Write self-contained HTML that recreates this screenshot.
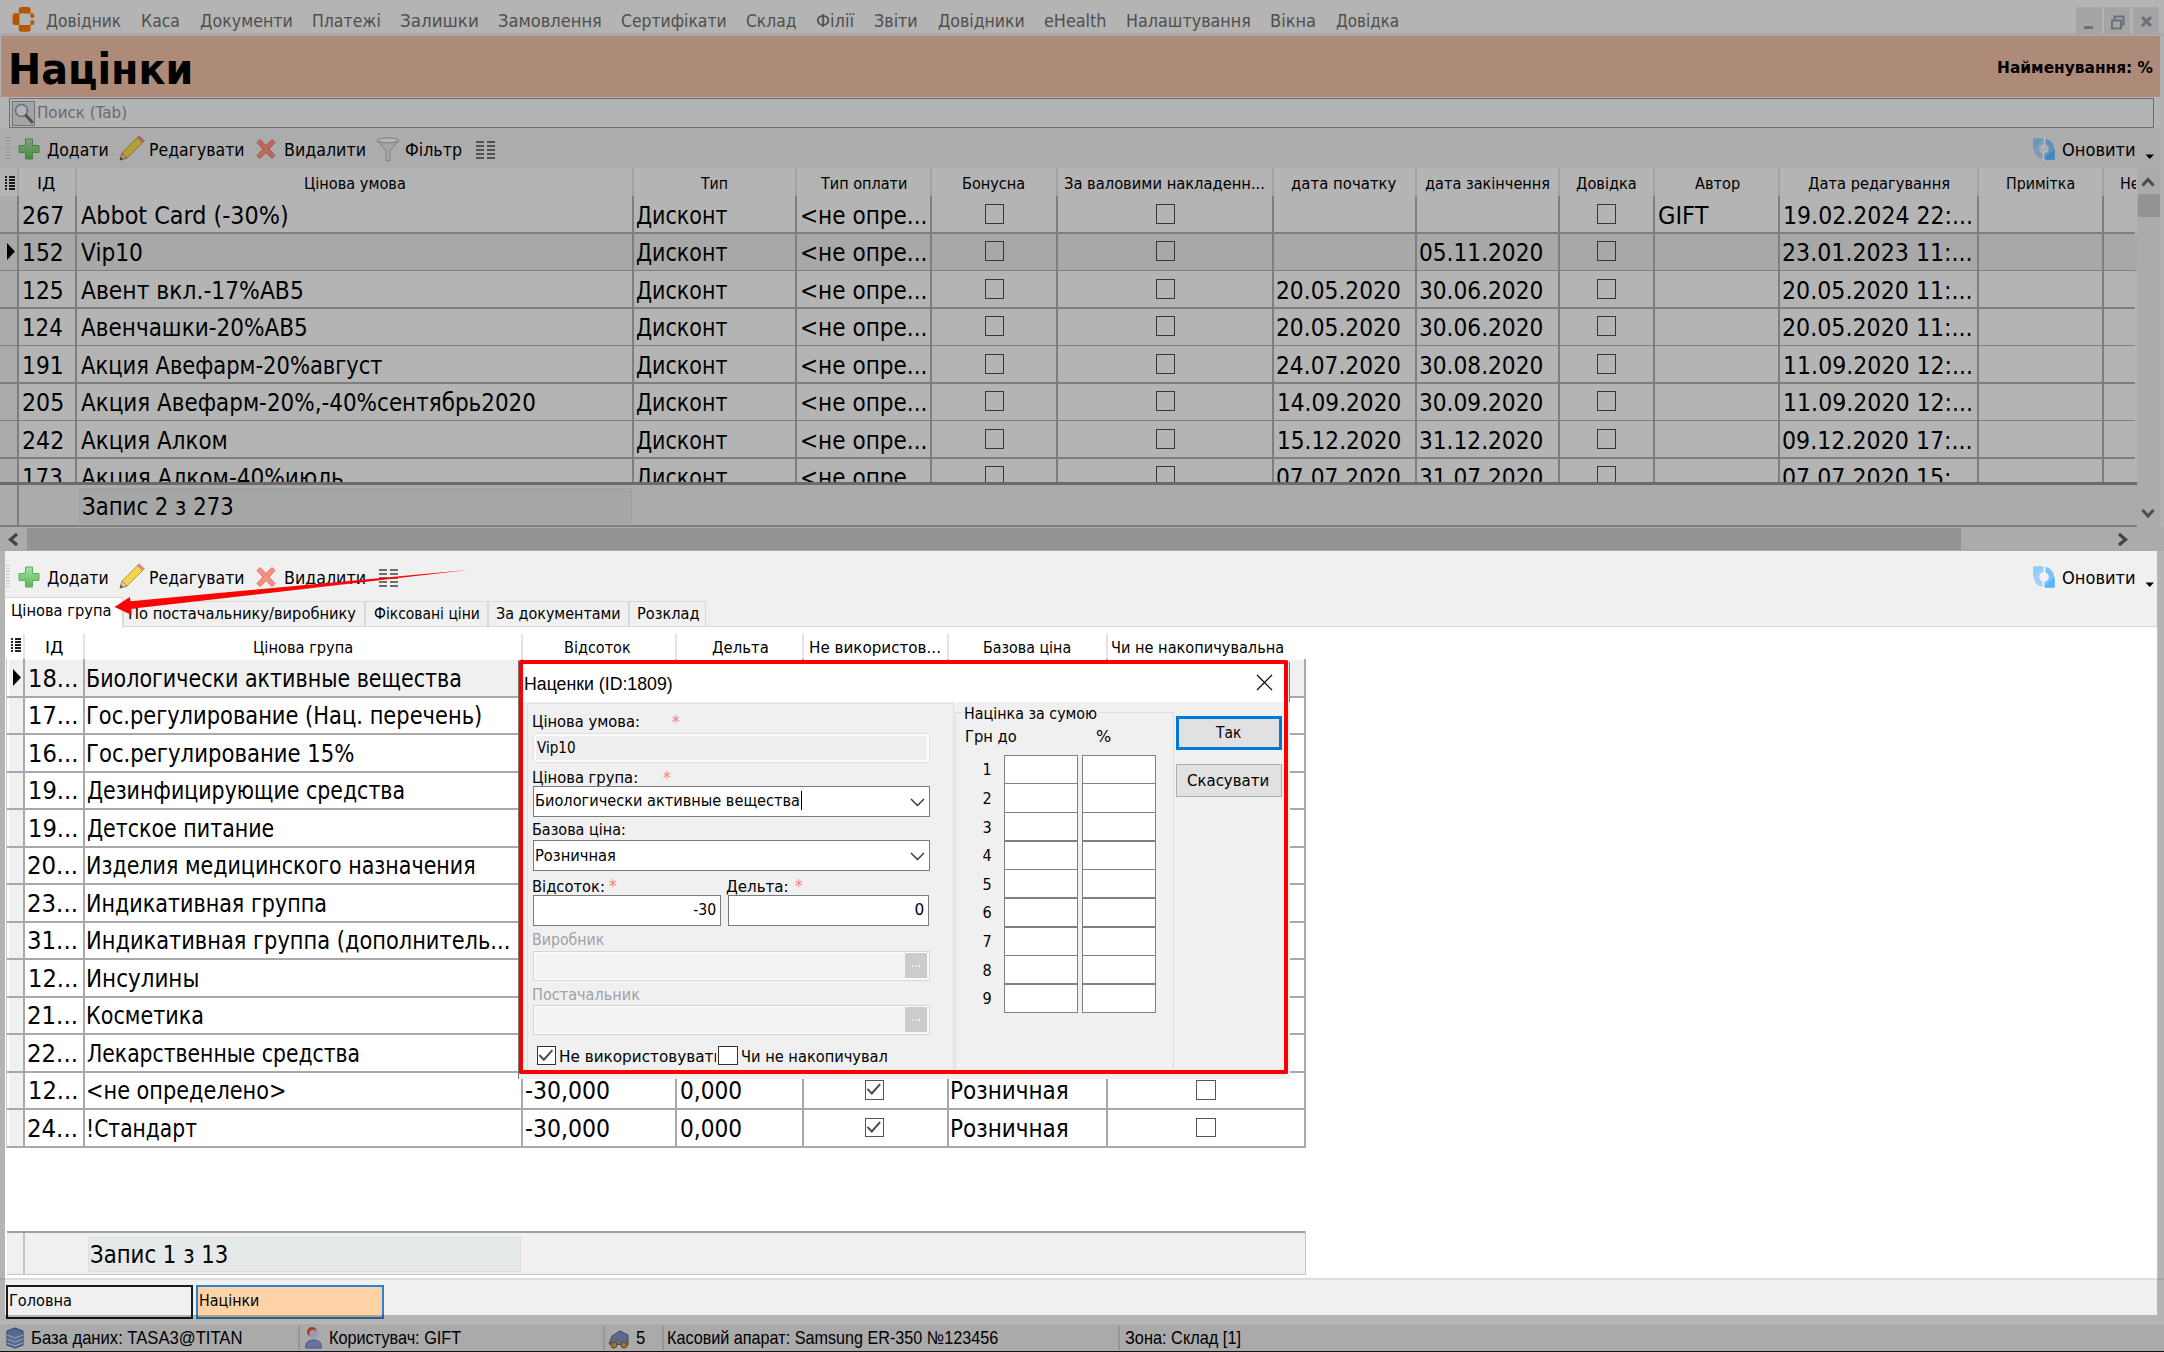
<!DOCTYPE html>
<html lang="uk"><head><meta charset="utf-8"><title>Націнки</title><style>html,body{margin:0;padding:0}body{width:2164px;height:1352px;position:relative;overflow:hidden;background:#f0f0f0;font-family:'DejaVu Sans','Liberation Sans',sans-serif;color:#000}
div,span.t,svg{position:absolute}span.t{white-space:nowrap;display:block}div{overflow:visible}</style></head>
<body>
<div style="left:0px;top:0px;width:2164px;height:36px;background:#f0f0f0;"></div>
<div style="left:0px;top:33px;width:2164px;height:3px;background:#e2e2e2;"></div>
<span class="t" style="top:11.55px;font-size:18.5px;line-height:18.5px;color:#6a6a6a;left:46.00px;transform:scaleX(0.8359);transform-origin:0 0;">Довідник</span>
<span class="t" style="top:11.55px;font-size:18.5px;line-height:18.5px;color:#6a6a6a;left:141.15px;transform:scaleX(0.8478);transform-origin:0 0;">Каса</span>
<span class="t" style="top:11.55px;font-size:18.5px;line-height:18.5px;color:#6a6a6a;left:200.00px;transform:scaleX(0.8590);transform-origin:0 0;">Документи</span>
<span class="t" style="top:11.55px;font-size:18.5px;line-height:18.5px;color:#6a6a6a;left:312.15px;transform:scaleX(0.8492);transform-origin:0 0;">Платежі</span>
<span class="t" style="top:11.55px;font-size:18.5px;line-height:18.5px;color:#6a6a6a;left:400.10px;transform:scaleX(0.9043);transform-origin:0 0;">Залишки</span>
<span class="t" style="top:11.55px;font-size:18.5px;line-height:18.5px;color:#6a6a6a;left:498.12px;transform:scaleX(0.8810);transform-origin:0 0;">Замовлення</span>
<span class="t" style="top:11.55px;font-size:18.5px;line-height:18.5px;color:#6a6a6a;left:621.16px;transform:scaleX(0.8449);transform-origin:0 0;">Сертифікати</span>
<span class="t" style="top:11.55px;font-size:18.5px;line-height:18.5px;color:#6a6a6a;left:746.16px;transform:scaleX(0.8412);transform-origin:0 0;">Склад</span>
<span class="t" style="top:11.55px;font-size:18.5px;line-height:18.5px;color:#6a6a6a;left:816.12px;transform:scaleX(0.8831);transform-origin:0 0;">Філії</span>
<span class="t" style="top:11.55px;font-size:18.5px;line-height:18.5px;color:#6a6a6a;left:874.14px;transform:scaleX(0.8628);transform-origin:0 0;">Звіти</span>
<span class="t" style="top:11.55px;font-size:18.5px;line-height:18.5px;color:#6a6a6a;left:938.00px;transform:scaleX(0.8523);transform-origin:0 0;">Довідники</span>
<span class="t" style="top:11.55px;font-size:18.5px;line-height:18.5px;color:#6a6a6a;left:1044.13px;transform:scaleX(0.8664);transform-origin:0 0;">eHealth</span>
<span class="t" style="top:11.55px;font-size:18.5px;line-height:18.5px;color:#6a6a6a;left:1126.14px;transform:scaleX(0.8632);transform-origin:0 0;">Налаштування</span>
<span class="t" style="top:11.55px;font-size:18.5px;line-height:18.5px;color:#6a6a6a;left:1270.12px;transform:scaleX(0.8782);transform-origin:0 0;">Вікна</span>
<span class="t" style="top:11.55px;font-size:18.5px;line-height:18.5px;color:#6a6a6a;left:1336.00px;transform:scaleX(0.8182);transform-origin:0 0;">Довідка</span>
<svg style="left:0;top:0" width="40" height="36" viewBox="0 0 40 36" fill="#f57300"><path d="M18.800 13.400V9.500a2.500 2.500 0 0 1 2.500-2.500h6.800a2.500 2.500 0 0 1 2.500 2.500v3.900z"/><path d="M18.800 25h11.800v4.300a2.500 2.500 0 0 1-2.500 2.500h-6.800a2.500 2.500 0 0 1-2.500-2.500z"/><path d="M19.400 13.200v11.900h-4.300a2.500 2.500 0 0 1-2.500-2.500v-6.900a2.500 2.500 0 0 1 2.500-2.500z"/><path d="M30.400 13.200h1.600a2.200 2.200 0 0 1 2.200 2.200v2.400h-3.200a1 1 0 0 1-.6-1zM30.400 25.100h1.600a2.200 2.200 0 0 0 2.200-2.200v-2.300h-3.200a1 1 0 0 0-.6 1z"/></svg>
<div style="left:2076px;top:7px;width:26px;height:28px;background:#dcdcdc;"></div>
<div style="left:2104px;top:7px;width:26px;height:28px;background:#dcdcdc;"></div>
<div style="left:2133px;top:7px;width:26px;height:28px;background:#dcdcdc;"></div>
<svg style="left:2076px;top:7px" width="84" height="28" viewBox="0 0 84 28" fill="none" stroke="#8d97a8" stroke-width="2"><path d="M8 20.5h9" stroke-width="3"/><path d="M38.5 13.5v-4h9v8h-3M36 13.5h9v8h-9z"/><path d="M66 10l9 9M75 10l-9 9" stroke-width="3"/></svg>
<div style="left:1px;top:36px;width:2159px;height:61px;background:#e8b9a0;"></div>
<span class="t" style="top:48.80px;font-size:42px;line-height:42px;font-weight:bold;left:7.96px;transform:scaleX(0.9454);transform-origin:0 0;">Націнки</span>
<span class="t" style="top:60.55px;font-size:15.5px;line-height:15.5px;font-weight:bold;right:11.17px;transform:scaleX(0.9935);transform-origin:100% 0;">Найменування: %</span>
<div style="left:9px;top:98px;width:2144.5px;height:30px;background:#f0f0f0;border:1.700px solid #929292;box-sizing:border-box;"></div>
<div style="left:12px;top:101px;width:23px;height:25px;background:#dcdcdc;border:1px solid #9a9a9a;box-sizing:border-box;"></div>
<svg style="left:13px;top:102px" width="22" height="23" viewBox="0 0 22 23"><circle cx="8.5" cy="8.5" r="6" fill="#e8f0fb" stroke="#8a93a0" stroke-width="1.6"/><path d="M13 13.5l6 6.5" stroke="#6b6b6b" stroke-width="3" stroke-linecap="round"/></svg>
<span class="t" style="top:104.80px;font-size:16px;line-height:16px;color:#8c8c9a;left:37.05px;transform:scaleX(0.9453);transform-origin:0 0;">Поиск (Tab)</span>
<div style="left:0px;top:128px;width:2164px;height:40px;background:#e6e6e6;"></div>
<div style="left:6px;top:136.5px;width:4px;height:1.5px;background:#c4c4c4;"></div>
<div style="left:6px;top:139.53px;width:4px;height:1.5px;background:#c4c4c4;"></div>
<div style="left:6px;top:142.56px;width:4px;height:1.5px;background:#c4c4c4;"></div>
<div style="left:6px;top:145.59px;width:4px;height:1.5px;background:#c4c4c4;"></div>
<div style="left:6px;top:148.62px;width:4px;height:1.5px;background:#c4c4c4;"></div>
<div style="left:6px;top:151.65px;width:4px;height:1.5px;background:#c4c4c4;"></div>
<div style="left:6px;top:154.68px;width:4px;height:1.5px;background:#c4c4c4;"></div>
<div style="left:6px;top:157.71px;width:4px;height:1.5px;background:#c4c4c4;"></div>
<svg style="left:18px;top:138.0px" width="22" height="22" viewBox="0 0 22 22"><defs><linearGradient id="gp130" x1="0" y1="0" x2="0" y2="1"><stop offset="0" stop-color="#a5e0a0"/><stop offset="1" stop-color="#5bb85a"/></linearGradient></defs><path d="M7.5 1h7v6.5H21v7h-6.5V21h-7v-6.5H1v-7h6.5z" fill="url(#gp130)" stroke="#58b058" stroke-width="1"/></svg>
<span class="t" style="top:140.55px;font-size:18.5px;line-height:18.5px;left:47.40px;transform:scaleX(0.8483);transform-origin:0 0;">Додати</span>
<svg style="left:118px;top:135.0px" width="27" height="27" viewBox="0 0 27 27"><path d="M2 25l2.2-7L19.5 2.5l5 5L9 23z" fill="#f3d54e" stroke="#b99a2e" stroke-width="1"/><path d="M19.5 2.5l1.8-1.6 5 5-1.8 1.6z" fill="#ee8f8f" stroke="#c76b6b" stroke-width=".8"/><path d="M2 25l2.2-7L9 23z" fill="#e9c9a0" stroke="#8a7a5a" stroke-width=".8"/><path d="M2 25l.9-2.9 2 2z" fill="#444"/></svg>
<span class="t" style="top:140.55px;font-size:18.5px;line-height:18.5px;left:148.65px;transform:scaleX(0.8500);transform-origin:0 0;">Редагувати</span>
<svg style="left:254px;top:138.0px" width="24" height="22" viewBox="0 0 24 22"><path d="M3 4.5L6 1.5l6 6 6-6 3 3-6 6.5 6 6.5-3 3-6-6-6 6-3-3 6-6.5z" fill="#f4917f" stroke="#e56e5c" stroke-width="1"/></svg>
<span class="t" style="top:140.55px;font-size:18.5px;line-height:18.5px;left:283.54px;transform:scaleX(0.8591);transform-origin:0 0;">Видалити</span>
<svg style="left:376px;top:136.5px" width="24" height="25" viewBox="0 0 24 25"><ellipse cx="12" cy="3.5" rx="10.5" ry="2.6" fill="#f4f4f4" stroke="#a9a9a9"/><path d="M1.6 4L10 13.5v10l4 .5V13.5L22.4 4c-3 2.4-17.8 2.4-20.8 0z" fill="#dedede" stroke="#a9a9a9"/></svg>
<span class="t" style="top:140.55px;font-size:18.5px;line-height:18.5px;left:405.44px;transform:scaleX(0.8626);transform-origin:0 0;">Фільтр</span>
<div style="left:476px;top:141px;width:8px;height:2px;background:#6e6e6e;"></div>
<div style="left:487px;top:141px;width:8px;height:2px;background:#6e6e6e;"></div>
<div style="left:476px;top:145px;width:8px;height:2px;background:#6e6e6e;"></div>
<div style="left:487px;top:145px;width:8px;height:2px;background:#6e6e6e;"></div>
<div style="left:476px;top:149px;width:8px;height:2px;background:#6e6e6e;"></div>
<div style="left:487px;top:149px;width:8px;height:2px;background:#6e6e6e;"></div>
<div style="left:476px;top:153px;width:8px;height:2px;background:#6e6e6e;"></div>
<div style="left:487px;top:153px;width:8px;height:2px;background:#6e6e6e;"></div>
<div style="left:476px;top:157px;width:8px;height:2px;background:#6e6e6e;"></div>
<div style="left:487px;top:157px;width:8px;height:2px;background:#6e6e6e;"></div>
<svg style="left:2032px;top:137px" width="24" height="24" viewBox="0 0 24 24" fill="none"><path d="M12 19.500A7.500 7.500 0 0 1 12 4.500" stroke="#a3d0f6" stroke-width="5.400"/><path d="M12 4.500A7.500 7.500 0 0 1 12 19.500" stroke="#7cc2f5" stroke-width="5.400"/><path d="M1.200 1.200h10.600L8.300 5.200 5.600 8 1.200 12z" fill="#8ecbf7"/><path d="M22.800 22.800H12.200l3.500-4 2.700-2.800 4.400-4z" fill="#55b5f8"/><path d="M12.600 0v7.800l-3 3M11.400 24v-7.800l3-3" stroke="#f4f8fc" stroke-width="1.700"/></svg>
<span class="t" style="top:140.55px;font-size:18.5px;line-height:18.5px;left:2061.82px;transform:scaleX(0.8791);transform-origin:0 0;">Оновити</span>
<svg style="left:2145px;top:153.5px" width="10" height="6" viewBox="0 0 10 6"><path d="M.5 .5h8.500L4.750 5z" fill="#000"/></svg>
<div style="left:0px;top:168px;width:2137px;height:28px;background:#f0f0f0;"></div>
<div style="left:18px;top:196px;width:2119px;height:287px;background:#f0f0f0;"></div>
<div style="left:0px;top:196px;width:18px;height:287px;background:#e5e5e5;"></div>
<div style="left:0px;top:233.5px;width:2137px;height:37px;background:#e0e0e0;"></div>
<div style="left:17.2px;top:196px;width:1.7px;height:287px;background:#a9a9a9;"></div>
<div style="left:17.2px;top:168px;width:1.5px;height:28px;background:#d8d8d8;"></div>
<div style="left:75.2px;top:196px;width:1.7px;height:287px;background:#a9a9a9;"></div>
<div style="left:75.2px;top:168px;width:1.5px;height:28px;background:#d8d8d8;"></div>
<div style="left:632.2px;top:196px;width:1.7px;height:287px;background:#a9a9a9;"></div>
<div style="left:632.2px;top:168px;width:1.5px;height:28px;background:#d8d8d8;"></div>
<div style="left:795.2px;top:196px;width:1.7px;height:287px;background:#a9a9a9;"></div>
<div style="left:795.2px;top:168px;width:1.5px;height:28px;background:#d8d8d8;"></div>
<div style="left:930.2px;top:196px;width:1.7px;height:287px;background:#a9a9a9;"></div>
<div style="left:930.2px;top:168px;width:1.5px;height:28px;background:#d8d8d8;"></div>
<div style="left:1056.2px;top:196px;width:1.7px;height:287px;background:#a9a9a9;"></div>
<div style="left:1056.2px;top:168px;width:1.5px;height:28px;background:#d8d8d8;"></div>
<div style="left:1272.2px;top:196px;width:1.7px;height:287px;background:#a9a9a9;"></div>
<div style="left:1272.2px;top:168px;width:1.5px;height:28px;background:#d8d8d8;"></div>
<div style="left:1415.2px;top:196px;width:1.7px;height:287px;background:#a9a9a9;"></div>
<div style="left:1415.2px;top:168px;width:1.5px;height:28px;background:#d8d8d8;"></div>
<div style="left:1558.2px;top:196px;width:1.7px;height:287px;background:#a9a9a9;"></div>
<div style="left:1558.2px;top:168px;width:1.5px;height:28px;background:#d8d8d8;"></div>
<div style="left:1653.2px;top:196px;width:1.7px;height:287px;background:#a9a9a9;"></div>
<div style="left:1653.2px;top:168px;width:1.5px;height:28px;background:#d8d8d8;"></div>
<div style="left:1778.2px;top:196px;width:1.7px;height:287px;background:#a9a9a9;"></div>
<div style="left:1778.2px;top:168px;width:1.5px;height:28px;background:#d8d8d8;"></div>
<div style="left:1977.2px;top:196px;width:1.7px;height:287px;background:#a9a9a9;"></div>
<div style="left:1977.2px;top:168px;width:1.5px;height:28px;background:#d8d8d8;"></div>
<div style="left:2102.2px;top:196px;width:1.7px;height:287px;background:#a9a9a9;"></div>
<div style="left:2102.2px;top:168px;width:1.5px;height:28px;background:#d8d8d8;"></div>
<div style="left:0px;top:232.0px;width:2135px;height:1.7px;background:#a9a9a9;"></div>
<div style="left:0px;top:269.5px;width:2135px;height:1.7px;background:#a9a9a9;"></div>
<div style="left:0px;top:307.0px;width:2135px;height:1.7px;background:#a9a9a9;"></div>
<div style="left:0px;top:344.5px;width:2135px;height:1.7px;background:#a9a9a9;"></div>
<div style="left:0px;top:382.0px;width:2135px;height:1.7px;background:#a9a9a9;"></div>
<div style="left:0px;top:419.5px;width:2135px;height:1.7px;background:#a9a9a9;"></div>
<div style="left:0px;top:457.0px;width:2135px;height:1.7px;background:#a9a9a9;"></div>
<div style="left:9px;top:176px;width:6px;height:2px;background:#222;"></div>
<div style="left:5px;top:176px;width:2px;height:2px;background:#222;"></div>
<div style="left:9px;top:179px;width:6px;height:2px;background:#222;"></div>
<div style="left:5px;top:179px;width:2px;height:2px;background:#222;"></div>
<div style="left:9px;top:182px;width:6px;height:2px;background:#222;"></div>
<div style="left:5px;top:182px;width:2px;height:2px;background:#222;"></div>
<div style="left:9px;top:185px;width:6px;height:2px;background:#222;"></div>
<div style="left:5px;top:185px;width:2px;height:2px;background:#222;"></div>
<div style="left:9px;top:188px;width:6px;height:2px;background:#222;"></div>
<div style="left:5px;top:188px;width:2px;height:2px;background:#222;"></div>
<span class="t" style="top:175.80px;font-size:16px;line-height:16px;left:36.93px;transform:scaleX(1.0688);transform-origin:0 0;">ІД</span>
<span class="t" style="top:175.80px;font-size:16px;line-height:16px;left:303.89px;transform:scaleX(0.9093);transform-origin:0 0;">Цінова умова</span>
<span class="t" style="top:175.80px;font-size:16px;line-height:16px;left:700.88px;transform:scaleX(0.8822);transform-origin:0 0;">Тип</span>
<span class="t" style="top:175.80px;font-size:16px;line-height:16px;left:820.90px;transform:scaleX(0.9022);transform-origin:0 0;">Тип оплати</span>
<span class="t" style="top:175.80px;font-size:16px;line-height:16px;left:961.59px;transform:scaleX(0.9050);transform-origin:0 0;">Бонусна</span>
<span class="t" style="top:175.80px;font-size:16px;line-height:16px;left:1064.08px;transform:scaleX(0.9181);transform-origin:0 0;">За валовими накладенн...</span>
<span class="t" style="top:175.80px;font-size:16px;line-height:16px;left:1291.00px;transform:scaleX(0.9328);transform-origin:0 0;">дата початку</span>
<span class="t" style="top:175.80px;font-size:16px;line-height:16px;left:1425.00px;transform:scaleX(0.9076);transform-origin:0 0;">дата закінчення</span>
<span class="t" style="top:175.80px;font-size:16px;line-height:16px;left:1576.00px;transform:scaleX(0.9106);transform-origin:0 0;">Довідка</span>
<span class="t" style="top:175.80px;font-size:16px;line-height:16px;left:1694.50px;transform:scaleX(0.9094);transform-origin:0 0;">Автор</span>
<span class="t" style="top:175.80px;font-size:16px;line-height:16px;left:1808.00px;transform:scaleX(0.9164);transform-origin:0 0;">Дата редагування</span>
<span class="t" style="top:175.80px;font-size:16px;line-height:16px;left:2005.61px;transform:scaleX(0.8872);transform-origin:0 0;">Примітка</span>
<div style="left:2117.50px;top:175.80px;width:18.80px;height:22.4px;overflow:hidden"><span class="t" style="top:0;font-size:16px;line-height:16px;left:2.10px;transform:scaleX(0.8986);transform-origin:0 0;">Не</span></div>
<div style="left:0;top:196px;width:2137px;height:286.5px;overflow:hidden">
<span class="t" style="top:7.15px;font-size:25.3px;line-height:25.3px;left:21.63px;transform:scaleX(0.8741);transform-origin:0 0;">267</span>
<span class="t" style="top:7.15px;font-size:25.3px;line-height:25.3px;left:81.00px;transform:scaleX(0.8830);transform-origin:0 0;">Abbot Card (-30%)</span>
<span class="t" style="top:7.15px;font-size:25.3px;line-height:25.3px;left:636.18px;transform:scaleX(0.8152);transform-origin:0 0;">Дисконт</span>
<span class="t" style="top:7.15px;font-size:25.3px;line-height:25.3px;left:800.29px;transform:scaleX(0.8548);transform-origin:0 0;">&lt;не опре...</span>
<span class="t" style="top:7.15px;font-size:25.3px;line-height:25.3px;left:1658.11px;transform:scaleX(0.8902);transform-origin:0 0;">GIFT</span>
<span class="t" style="top:7.15px;font-size:25.3px;line-height:25.3px;left:1782.65px;transform:scaleX(0.8733);transform-origin:0 0;">19.02.2024 22:...</span>
<div style="left:984.8000000000001px;top:7.8px;width:19.6px;height:19.9px;border:1.800px solid #4a4a4a;box-sizing:border-box;"></div>
<div style="left:1155.8px;top:7.8px;width:19.6px;height:19.9px;border:1.800px solid #4a4a4a;box-sizing:border-box;"></div>
<div style="left:1596.8px;top:7.8px;width:19.6px;height:19.9px;border:1.800px solid #4a4a4a;box-sizing:border-box;"></div>
<span class="t" style="top:44.15px;font-size:25.3px;line-height:25.3px;left:22.18px;transform:scaleX(0.8622);transform-origin:0 0;">152</span>
<span class="t" style="top:44.15px;font-size:25.3px;line-height:25.3px;left:81.00px;transform:scaleX(0.8600);transform-origin:0 0;">Vip10</span>
<span class="t" style="top:44.15px;font-size:25.3px;line-height:25.3px;left:636.18px;transform:scaleX(0.8152);transform-origin:0 0;">Дисконт</span>
<span class="t" style="top:44.15px;font-size:25.3px;line-height:25.3px;left:800.29px;transform:scaleX(0.8548);transform-origin:0 0;">&lt;не опре...</span>
<span class="t" style="top:44.15px;font-size:25.3px;line-height:25.3px;left:1419.14px;transform:scaleX(0.8582);transform-origin:0 0;">05.11.2020</span>
<span class="t" style="top:44.15px;font-size:25.3px;line-height:25.3px;left:1782.12px;transform:scaleX(0.8757);transform-origin:0 0;">23.01.2023 11:...</span>
<div style="left:984.8000000000001px;top:45.300000000000004px;width:19.6px;height:19.9px;border:1.800px solid #4a4a4a;box-sizing:border-box;"></div>
<div style="left:1155.8px;top:45.300000000000004px;width:19.6px;height:19.9px;border:1.800px solid #4a4a4a;box-sizing:border-box;"></div>
<div style="left:1596.8px;top:45.300000000000004px;width:19.6px;height:19.9px;border:1.800px solid #4a4a4a;box-sizing:border-box;"></div>
<span class="t" style="top:82.15px;font-size:25.3px;line-height:25.3px;left:22.18px;transform:scaleX(0.8622);transform-origin:0 0;">125</span>
<span class="t" style="top:82.15px;font-size:25.3px;line-height:25.3px;left:81.00px;transform:scaleX(0.8649);transform-origin:0 0;">Авент вкл.-17%АВ5</span>
<span class="t" style="top:82.15px;font-size:25.3px;line-height:25.3px;left:636.18px;transform:scaleX(0.8152);transform-origin:0 0;">Дисконт</span>
<span class="t" style="top:82.15px;font-size:25.3px;line-height:25.3px;left:800.29px;transform:scaleX(0.8548);transform-origin:0 0;">&lt;не опре...</span>
<span class="t" style="top:82.15px;font-size:25.3px;line-height:25.3px;left:1276.14px;transform:scaleX(0.8617);transform-origin:0 0;">20.05.2020</span>
<span class="t" style="top:82.15px;font-size:25.3px;line-height:25.3px;left:1419.14px;transform:scaleX(0.8582);transform-origin:0 0;">30.06.2020</span>
<span class="t" style="top:82.15px;font-size:25.3px;line-height:25.3px;left:1782.12px;transform:scaleX(0.8757);transform-origin:0 0;">20.05.2020 11:...</span>
<div style="left:984.8000000000001px;top:82.8px;width:19.6px;height:19.9px;border:1.800px solid #4a4a4a;box-sizing:border-box;"></div>
<div style="left:1155.8px;top:82.8px;width:19.6px;height:19.9px;border:1.800px solid #4a4a4a;box-sizing:border-box;"></div>
<div style="left:1596.8px;top:82.8px;width:19.6px;height:19.9px;border:1.800px solid #4a4a4a;box-sizing:border-box;"></div>
<span class="t" style="top:119.15px;font-size:25.3px;line-height:25.3px;left:22.21px;transform:scaleX(0.8431);transform-origin:0 0;">124</span>
<span class="t" style="top:119.15px;font-size:25.3px;line-height:25.3px;left:81.00px;transform:scaleX(0.8534);transform-origin:0 0;">Авенчашки-20%АВ5</span>
<span class="t" style="top:119.15px;font-size:25.3px;line-height:25.3px;left:636.18px;transform:scaleX(0.8152);transform-origin:0 0;">Дисконт</span>
<span class="t" style="top:119.15px;font-size:25.3px;line-height:25.3px;left:800.29px;transform:scaleX(0.8548);transform-origin:0 0;">&lt;не опре...</span>
<span class="t" style="top:119.15px;font-size:25.3px;line-height:25.3px;left:1276.14px;transform:scaleX(0.8617);transform-origin:0 0;">20.05.2020</span>
<span class="t" style="top:119.15px;font-size:25.3px;line-height:25.3px;left:1419.14px;transform:scaleX(0.8582);transform-origin:0 0;">30.06.2020</span>
<span class="t" style="top:119.15px;font-size:25.3px;line-height:25.3px;left:1782.12px;transform:scaleX(0.8757);transform-origin:0 0;">20.05.2020 11:...</span>
<div style="left:984.8000000000001px;top:120.3px;width:19.6px;height:19.9px;border:1.800px solid #4a4a4a;box-sizing:border-box;"></div>
<div style="left:1155.8px;top:120.3px;width:19.6px;height:19.9px;border:1.800px solid #4a4a4a;box-sizing:border-box;"></div>
<div style="left:1596.8px;top:120.3px;width:19.6px;height:19.9px;border:1.800px solid #4a4a4a;box-sizing:border-box;"></div>
<span class="t" style="top:157.15px;font-size:25.3px;line-height:25.3px;left:22.18px;transform:scaleX(0.8622);transform-origin:0 0;">191</span>
<span class="t" style="top:157.15px;font-size:25.3px;line-height:25.3px;left:81.00px;transform:scaleX(0.8327);transform-origin:0 0;">Акция Авефарм-20%август</span>
<span class="t" style="top:157.15px;font-size:25.3px;line-height:25.3px;left:636.18px;transform:scaleX(0.8152);transform-origin:0 0;">Дисконт</span>
<span class="t" style="top:157.15px;font-size:25.3px;line-height:25.3px;left:800.29px;transform:scaleX(0.8548);transform-origin:0 0;">&lt;не опре...</span>
<span class="t" style="top:157.15px;font-size:25.3px;line-height:25.3px;left:1276.14px;transform:scaleX(0.8617);transform-origin:0 0;">24.07.2020</span>
<span class="t" style="top:157.15px;font-size:25.3px;line-height:25.3px;left:1419.14px;transform:scaleX(0.8582);transform-origin:0 0;">30.08.2020</span>
<span class="t" style="top:157.15px;font-size:25.3px;line-height:25.3px;left:1782.65px;transform:scaleX(0.8733);transform-origin:0 0;">11.09.2020 12:...</span>
<div style="left:984.8000000000001px;top:157.79999999999998px;width:19.6px;height:19.9px;border:1.800px solid #4a4a4a;box-sizing:border-box;"></div>
<div style="left:1155.8px;top:157.79999999999998px;width:19.6px;height:19.9px;border:1.800px solid #4a4a4a;box-sizing:border-box;"></div>
<div style="left:1596.8px;top:157.79999999999998px;width:19.6px;height:19.9px;border:1.800px solid #4a4a4a;box-sizing:border-box;"></div>
<span class="t" style="top:194.15px;font-size:25.3px;line-height:25.3px;left:21.63px;transform:scaleX(0.8741);transform-origin:0 0;">205</span>
<span class="t" style="top:194.15px;font-size:25.3px;line-height:25.3px;left:81.00px;transform:scaleX(0.8500);transform-origin:0 0;">Акция Авефарм-20%,-40%сентябрь2020</span>
<span class="t" style="top:194.15px;font-size:25.3px;line-height:25.3px;left:636.18px;transform:scaleX(0.8152);transform-origin:0 0;">Дисконт</span>
<span class="t" style="top:194.15px;font-size:25.3px;line-height:25.3px;left:800.29px;transform:scaleX(0.8548);transform-origin:0 0;">&lt;не опре...</span>
<span class="t" style="top:194.15px;font-size:25.3px;line-height:25.3px;left:1276.68px;transform:scaleX(0.8579);transform-origin:0 0;">14.09.2020</span>
<span class="t" style="top:194.15px;font-size:25.3px;line-height:25.3px;left:1419.14px;transform:scaleX(0.8582);transform-origin:0 0;">30.09.2020</span>
<span class="t" style="top:194.15px;font-size:25.3px;line-height:25.3px;left:1782.65px;transform:scaleX(0.8733);transform-origin:0 0;">11.09.2020 12:...</span>
<div style="left:984.8000000000001px;top:195.29999999999998px;width:19.6px;height:19.9px;border:1.800px solid #4a4a4a;box-sizing:border-box;"></div>
<div style="left:1155.8px;top:195.29999999999998px;width:19.6px;height:19.9px;border:1.800px solid #4a4a4a;box-sizing:border-box;"></div>
<div style="left:1596.8px;top:195.29999999999998px;width:19.6px;height:19.9px;border:1.800px solid #4a4a4a;box-sizing:border-box;"></div>
<span class="t" style="top:232.15px;font-size:25.3px;line-height:25.3px;left:21.63px;transform:scaleX(0.8741);transform-origin:0 0;">242</span>
<span class="t" style="top:232.15px;font-size:25.3px;line-height:25.3px;left:81.00px;transform:scaleX(0.8493);transform-origin:0 0;">Акция Алком</span>
<span class="t" style="top:232.15px;font-size:25.3px;line-height:25.3px;left:636.18px;transform:scaleX(0.8152);transform-origin:0 0;">Дисконт</span>
<span class="t" style="top:232.15px;font-size:25.3px;line-height:25.3px;left:800.29px;transform:scaleX(0.8548);transform-origin:0 0;">&lt;не опре...</span>
<span class="t" style="top:232.15px;font-size:25.3px;line-height:25.3px;left:1276.68px;transform:scaleX(0.8579);transform-origin:0 0;">15.12.2020</span>
<span class="t" style="top:232.15px;font-size:25.3px;line-height:25.3px;left:1419.14px;transform:scaleX(0.8582);transform-origin:0 0;">31.12.2020</span>
<span class="t" style="top:232.15px;font-size:25.3px;line-height:25.3px;left:1782.12px;transform:scaleX(0.8757);transform-origin:0 0;">09.12.2020 17:...</span>
<div style="left:984.8000000000001px;top:232.79999999999998px;width:19.6px;height:19.9px;border:1.800px solid #4a4a4a;box-sizing:border-box;"></div>
<div style="left:1155.8px;top:232.79999999999998px;width:19.6px;height:19.9px;border:1.800px solid #4a4a4a;box-sizing:border-box;"></div>
<div style="left:1596.8px;top:232.79999999999998px;width:19.6px;height:19.9px;border:1.800px solid #4a4a4a;box-sizing:border-box;"></div>
<span class="t" style="top:269.15px;font-size:25.3px;line-height:25.3px;left:22.21px;transform:scaleX(0.8431);transform-origin:0 0;">173</span>
<span class="t" style="top:269.15px;font-size:25.3px;line-height:25.3px;left:81.00px;transform:scaleX(0.8560);transform-origin:0 0;">Акция Алком-40%июль</span>
<span class="t" style="top:269.15px;font-size:25.3px;line-height:25.3px;left:636.18px;transform:scaleX(0.8152);transform-origin:0 0;">Дисконт</span>
<span class="t" style="top:269.15px;font-size:25.3px;line-height:25.3px;left:800.29px;transform:scaleX(0.8548);transform-origin:0 0;">&lt;не опре...</span>
<span class="t" style="top:269.15px;font-size:25.3px;line-height:25.3px;left:1276.14px;transform:scaleX(0.8617);transform-origin:0 0;">07.07.2020</span>
<span class="t" style="top:269.15px;font-size:25.3px;line-height:25.3px;left:1419.14px;transform:scaleX(0.8582);transform-origin:0 0;">31.07.2020</span>
<span class="t" style="top:269.15px;font-size:25.3px;line-height:25.3px;left:1782.12px;transform:scaleX(0.8757);transform-origin:0 0;">07.07.2020 15:...</span>
<div style="left:984.8000000000001px;top:270.3px;width:19.6px;height:19.9px;border:1.800px solid #4a4a4a;box-sizing:border-box;"></div>
<div style="left:1155.8px;top:270.3px;width:19.6px;height:19.9px;border:1.800px solid #4a4a4a;box-sizing:border-box;"></div>
<div style="left:1596.8px;top:270.3px;width:19.6px;height:19.9px;border:1.800px solid #4a4a4a;box-sizing:border-box;"></div>
</div>
<svg style="left:7px;top:243px" width="8" height="17" viewBox="0 0 8 17"><path d="M0 0l8 8.500L0 17z" fill="#000"/></svg>
<div style="left:0px;top:482px;width:2137px;height:2.5px;background:#8f8f8f;"></div>
<div style="left:0px;top:484.5px;width:2137px;height:41.5px;background:#e5e5e5;"></div>
<div style="left:0px;top:525px;width:2137px;height:1.5px;background:#a9a9a9;"></div>
<div style="left:17.2px;top:485px;width:1.7px;height:41px;background:#a9a9a9;"></div>
<div style="left:79px;top:488px;width:553px;height:35px;background:#dddfde;border:1px solid #d4d4d4;box-sizing:border-box;"></div>
<span class="t" style="top:494.15px;font-size:25.3px;line-height:25.3px;left:82.16px;transform:scaleX(0.8405);transform-origin:0 0;">Запис 2 з 273</span>
<div style="left:2137px;top:168px;width:23px;height:359px;background:#e5e5e5;"></div>
<div style="left:2160px;top:36px;width:4px;height:515px;background:#ededed;"></div>
<div style="left:2137.5px;top:194px;width:22px;height:23px;background:#c4c4c4;"></div>
<svg style="left:2140px;top:175px" width="16" height="12" viewBox="0 0 16 12" fill="none" stroke="#666" stroke-width="3"><path d="M2.500 10.500l5.500-6 5.500 6"/></svg>
<svg style="left:2140px;top:508px" width="16" height="12" viewBox="0 0 16 12" fill="none" stroke="#666" stroke-width="3"><path d="M2.500 2l5.500 6 5.500-6"/></svg>
<div style="left:0px;top:526.5px;width:2164px;height:24.5px;background:#e4e4e4;"></div>
<div style="left:27px;top:528px;width:1934px;height:22px;background:#c4c4c4;"></div>
<svg style="left:7px;top:532px" width="12" height="15" viewBox="0 0 12 15" fill="none" stroke="#5a5a5a" stroke-width="3.200"><path d="M10 2l-6.500 5.500 6.500 5.500"/></svg>
<svg style="left:2117px;top:532px" width="12" height="15" viewBox="0 0 12 15" fill="none" stroke="#5a5a5a" stroke-width="3.200"><path d="M2 2l6.500 5.500-6.500 5.500"/></svg>
<div style="left:0px;top:551px;width:2164px;height:47px;background:#f0f0f0;"></div>
<div style="left:6px;top:564.5px;width:4px;height:1.5px;background:#c4c4c4;"></div>
<div style="left:6px;top:567.53px;width:4px;height:1.5px;background:#c4c4c4;"></div>
<div style="left:6px;top:570.56px;width:4px;height:1.5px;background:#c4c4c4;"></div>
<div style="left:6px;top:573.59px;width:4px;height:1.5px;background:#c4c4c4;"></div>
<div style="left:6px;top:576.62px;width:4px;height:1.5px;background:#c4c4c4;"></div>
<div style="left:6px;top:579.65px;width:4px;height:1.5px;background:#c4c4c4;"></div>
<div style="left:6px;top:582.68px;width:4px;height:1.5px;background:#c4c4c4;"></div>
<div style="left:6px;top:585.71px;width:4px;height:1.5px;background:#c4c4c4;"></div>
<svg style="left:18px;top:566.0px" width="22" height="22" viewBox="0 0 22 22"><defs><linearGradient id="gp558" x1="0" y1="0" x2="0" y2="1"><stop offset="0" stop-color="#a5e0a0"/><stop offset="1" stop-color="#5bb85a"/></linearGradient></defs><path d="M7.5 1h7v6.5H21v7h-6.5V21h-7v-6.5H1v-7h6.5z" fill="url(#gp558)" stroke="#58b058" stroke-width="1"/></svg>
<span class="t" style="top:568.55px;font-size:18.5px;line-height:18.5px;left:47.40px;transform:scaleX(0.8483);transform-origin:0 0;">Додати</span>
<svg style="left:118px;top:563.0px" width="27" height="27" viewBox="0 0 27 27"><path d="M2 25l2.2-7L19.5 2.5l5 5L9 23z" fill="#f3d54e" stroke="#b99a2e" stroke-width="1"/><path d="M19.5 2.5l1.8-1.6 5 5-1.8 1.6z" fill="#ee8f8f" stroke="#c76b6b" stroke-width=".8"/><path d="M2 25l2.2-7L9 23z" fill="#e9c9a0" stroke="#8a7a5a" stroke-width=".8"/><path d="M2 25l.9-2.9 2 2z" fill="#444"/></svg>
<span class="t" style="top:568.55px;font-size:18.5px;line-height:18.5px;left:148.65px;transform:scaleX(0.8500);transform-origin:0 0;">Редагувати</span>
<svg style="left:254px;top:566.0px" width="24" height="22" viewBox="0 0 24 22"><path d="M3 4.5L6 1.5l6 6 6-6 3 3-6 6.5 6 6.5-3 3-6-6-6 6-3-3 6-6.5z" fill="#f4917f" stroke="#e56e5c" stroke-width="1"/></svg>
<span class="t" style="top:568.55px;font-size:18.5px;line-height:18.5px;left:283.54px;transform:scaleX(0.8591);transform-origin:0 0;">Видалити</span>
<div style="left:379px;top:569px;width:8px;height:2px;background:#6e6e6e;"></div>
<div style="left:390px;top:569px;width:8px;height:2px;background:#6e6e6e;"></div>
<div style="left:379px;top:573px;width:8px;height:2px;background:#6e6e6e;"></div>
<div style="left:390px;top:573px;width:8px;height:2px;background:#6e6e6e;"></div>
<div style="left:379px;top:577px;width:8px;height:2px;background:#6e6e6e;"></div>
<div style="left:390px;top:577px;width:8px;height:2px;background:#6e6e6e;"></div>
<div style="left:379px;top:581px;width:8px;height:2px;background:#6e6e6e;"></div>
<div style="left:390px;top:581px;width:8px;height:2px;background:#6e6e6e;"></div>
<div style="left:379px;top:585px;width:8px;height:2px;background:#6e6e6e;"></div>
<div style="left:390px;top:585px;width:8px;height:2px;background:#6e6e6e;"></div>
<svg style="left:2032px;top:565px" width="24" height="24" viewBox="0 0 24 24" fill="none"><path d="M12 19.500A7.500 7.500 0 0 1 12 4.500" stroke="#a3d0f6" stroke-width="5.400"/><path d="M12 4.500A7.500 7.500 0 0 1 12 19.500" stroke="#7cc2f5" stroke-width="5.400"/><path d="M1.200 1.200h10.600L8.300 5.200 5.600 8 1.200 12z" fill="#8ecbf7"/><path d="M22.800 22.800H12.200l3.500-4 2.700-2.800 4.400-4z" fill="#55b5f8"/><path d="M12.600 0v7.800l-3 3M11.400 24v-7.800l3-3" stroke="#f4f8fc" stroke-width="1.700"/></svg>
<span class="t" style="top:568.55px;font-size:18.5px;line-height:18.5px;left:2061.82px;transform:scaleX(0.8791);transform-origin:0 0;">Оновити</span>
<svg style="left:2145px;top:581.5px" width="10" height="6" viewBox="0 0 10 6"><path d="M.5 .5h8.500L4.750 5z" fill="#000"/></svg>
<div style="left:0px;top:598px;width:2164px;height:29px;background:#f0f0f0;"></div>
<div style="left:122px;top:626px;width:2036px;height:1px;background:#d9d9d9;"></div>
<div style="left:5px;top:627px;width:2153px;height:651px;background:#fff;"></div>
<div style="left:122.5px;top:600.5px;width:242.0px;height:26px;background:#f0f0f0;border:1px solid #d9d9d9;box-sizing:border-box;"></div>
<span class="t" style="top:605.80px;font-size:16px;line-height:16px;left:127.68px;transform:scaleX(0.9158);transform-origin:0 0;">По постачальнику/виробнику</span>
<div style="left:364.5px;top:600.5px;width:123.0px;height:26px;background:#f0f0f0;border:1px solid #d9d9d9;box-sizing:border-box;"></div>
<span class="t" style="top:605.80px;font-size:16px;line-height:16px;left:373.80px;transform:scaleX(0.8681);transform-origin:0 0;">Фіксовані ціни</span>
<div style="left:487.5px;top:600.5px;width:141.0px;height:26px;background:#f0f0f0;border:1px solid #d9d9d9;box-sizing:border-box;"></div>
<span class="t" style="top:605.80px;font-size:16px;line-height:16px;left:495.60px;transform:scaleX(0.8961);transform-origin:0 0;">За документами</span>
<div style="left:628.5px;top:600.5px;width:77.5px;height:26px;background:#f0f0f0;border:1px solid #d9d9d9;box-sizing:border-box;"></div>
<span class="t" style="top:605.80px;font-size:16px;line-height:16px;left:636.59px;transform:scaleX(0.9092);transform-origin:0 0;">Розклад</span>
<div style="left:5px;top:597px;width:117.5px;height:31px;background:#fff;border:1px solid #d9d9d9;box-sizing:border-box;border-bottom:none;border-left:none;"></div>
<span class="t" style="top:602.80px;font-size:16px;line-height:16px;left:11.28px;transform:scaleX(0.9154);transform-origin:0 0;">Цінова група</span>
<div style="left:23px;top:634px;width:2px;height:25px;background:#e4e4e4;"></div>
<div style="left:83px;top:634px;width:2px;height:25px;background:#e4e4e4;"></div>
<div style="left:520.5px;top:634px;width:2px;height:25px;background:#e4e4e4;"></div>
<div style="left:675px;top:634px;width:2px;height:25px;background:#e4e4e4;"></div>
<div style="left:801.5px;top:634px;width:2px;height:25px;background:#e4e4e4;"></div>
<div style="left:946.5px;top:634px;width:2px;height:25px;background:#e4e4e4;"></div>
<div style="left:1106px;top:634px;width:2px;height:25px;background:#e4e4e4;"></div>
<div style="left:15px;top:638px;width:6px;height:2px;background:#222;"></div>
<div style="left:11px;top:638px;width:2px;height:2px;background:#222;"></div>
<div style="left:15px;top:641px;width:6px;height:2px;background:#222;"></div>
<div style="left:11px;top:641px;width:2px;height:2px;background:#222;"></div>
<div style="left:15px;top:644px;width:6px;height:2px;background:#222;"></div>
<div style="left:11px;top:644px;width:2px;height:2px;background:#222;"></div>
<div style="left:15px;top:647px;width:6px;height:2px;background:#222;"></div>
<div style="left:11px;top:647px;width:2px;height:2px;background:#222;"></div>
<div style="left:15px;top:650px;width:6px;height:2px;background:#222;"></div>
<div style="left:11px;top:650px;width:2px;height:2px;background:#222;"></div>
<span class="t" style="top:639.80px;font-size:16px;line-height:16px;left:44.63px;transform:scaleX(1.0688);transform-origin:0 0;">ІД</span>
<span class="t" style="top:639.80px;font-size:16px;line-height:16px;left:252.69px;transform:scaleX(0.9136);transform-origin:0 0;">Цінова група</span>
<span class="t" style="top:639.80px;font-size:16px;line-height:16px;left:564.10px;transform:scaleX(0.9019);transform-origin:0 0;">Відсоток</span>
<span class="t" style="top:639.80px;font-size:16px;line-height:16px;left:711.50px;transform:scaleX(0.9284);transform-origin:0 0;">Дельта</span>
<span class="t" style="top:639.80px;font-size:16px;line-height:16px;left:809.05px;transform:scaleX(0.9468);transform-origin:0 0;">Не використов...</span>
<span class="t" style="top:639.80px;font-size:16px;line-height:16px;left:982.61px;transform:scaleX(0.8900);transform-origin:0 0;">Базова ціна</span>
<span class="t" style="top:639.80px;font-size:16px;line-height:16px;left:1111.09px;transform:scaleX(0.9089);transform-origin:0 0;">Чи не накопичувальна</span>
<div style="left:9px;top:660px;width:15px;height:487px;background:#f0f0f0;"></div>
<div style="left:24px;top:660px;width:1281px;height:36.5px;background:#f0f0f0;"></div>
<div style="left:23px;top:659px;width:2px;height:488.5px;background:#a9a9a9;"></div>
<div style="left:83px;top:659px;width:2px;height:488.5px;background:#a9a9a9;"></div>
<div style="left:520.5px;top:659px;width:2px;height:488.5px;background:#a9a9a9;"></div>
<div style="left:675px;top:659px;width:2px;height:488.5px;background:#a9a9a9;"></div>
<div style="left:801.5px;top:659px;width:2px;height:488.5px;background:#a9a9a9;"></div>
<div style="left:946.5px;top:659px;width:2px;height:488.5px;background:#a9a9a9;"></div>
<div style="left:1106px;top:659px;width:2px;height:488.5px;background:#a9a9a9;"></div>
<div style="left:1304px;top:659px;width:2px;height:488.5px;background:#a9a9a9;"></div>
<div style="left:6px;top:659px;width:1px;height:488.5px;background:#c9c9c9;"></div>
<div style="left:7px;top:695.5px;width:1299px;height:2px;background:#a9a9a9;"></div>
<div style="left:7px;top:733.0px;width:1299px;height:2px;background:#a9a9a9;"></div>
<div style="left:7px;top:770.5px;width:1299px;height:2px;background:#a9a9a9;"></div>
<div style="left:7px;top:808.0px;width:1299px;height:2px;background:#a9a9a9;"></div>
<div style="left:7px;top:845.5px;width:1299px;height:2px;background:#a9a9a9;"></div>
<div style="left:7px;top:883.0px;width:1299px;height:2px;background:#a9a9a9;"></div>
<div style="left:7px;top:920.5px;width:1299px;height:2px;background:#a9a9a9;"></div>
<div style="left:7px;top:958.0px;width:1299px;height:2px;background:#a9a9a9;"></div>
<div style="left:7px;top:995.5px;width:1299px;height:2px;background:#a9a9a9;"></div>
<div style="left:7px;top:1033.0px;width:1299px;height:2px;background:#a9a9a9;"></div>
<div style="left:7px;top:1070.5px;width:1299px;height:2px;background:#a9a9a9;"></div>
<div style="left:7px;top:1108.0px;width:1299px;height:2px;background:#a9a9a9;"></div>
<div style="left:7px;top:1145.5px;width:1299px;height:2px;background:#a9a9a9;"></div>
<span class="t" style="top:666.15px;font-size:25.3px;line-height:25.3px;left:27.91px;transform:scaleX(0.8953);transform-origin:0 0;">18...</span>
<span class="t" style="top:666.15px;font-size:25.3px;line-height:25.3px;left:86.37px;transform:scaleX(0.8158);transform-origin:0 0;">Биологически активные вещества</span>
<span class="t" style="top:703.15px;font-size:25.3px;line-height:25.3px;left:27.91px;transform:scaleX(0.8953);transform-origin:0 0;">17...</span>
<span class="t" style="top:703.15px;font-size:25.3px;line-height:25.3px;left:86.34px;transform:scaleX(0.8304);transform-origin:0 0;">Гос.регулирование (Нац. перечень)</span>
<span class="t" style="top:741.15px;font-size:25.3px;line-height:25.3px;left:27.91px;transform:scaleX(0.8953);transform-origin:0 0;">16...</span>
<span class="t" style="top:741.15px;font-size:25.3px;line-height:25.3px;left:86.32px;transform:scaleX(0.8389);transform-origin:0 0;">Гос.регулирование 15%</span>
<span class="t" style="top:778.15px;font-size:25.3px;line-height:25.3px;left:27.91px;transform:scaleX(0.8953);transform-origin:0 0;">19...</span>
<span class="t" style="top:778.15px;font-size:25.3px;line-height:25.3px;left:87.19px;transform:scaleX(0.8118);transform-origin:0 0;">Дезинфицирующие средства</span>
<span class="t" style="top:816.15px;font-size:25.3px;line-height:25.3px;left:27.91px;transform:scaleX(0.8953);transform-origin:0 0;">19...</span>
<span class="t" style="top:816.15px;font-size:25.3px;line-height:25.3px;left:87.19px;transform:scaleX(0.8139);transform-origin:0 0;">Детское питание</span>
<span class="t" style="top:853.15px;font-size:25.3px;line-height:25.3px;left:27.40px;transform:scaleX(0.9048);transform-origin:0 0;">20...</span>
<span class="t" style="top:853.15px;font-size:25.3px;line-height:25.3px;left:86.37px;transform:scaleX(0.8155);transform-origin:0 0;">Изделия медицинского назначения</span>
<span class="t" style="top:891.15px;font-size:25.3px;line-height:25.3px;left:27.40px;transform:scaleX(0.9048);transform-origin:0 0;">23...</span>
<span class="t" style="top:891.15px;font-size:25.3px;line-height:25.3px;left:86.36px;transform:scaleX(0.8180);transform-origin:0 0;">Индикативная группа</span>
<span class="t" style="top:928.15px;font-size:25.3px;line-height:25.3px;left:27.40px;transform:scaleX(0.9048);transform-origin:0 0;">31...</span>
<span class="t" style="top:928.15px;font-size:25.3px;line-height:25.3px;left:86.34px;transform:scaleX(0.8288);transform-origin:0 0;">Индикативная группа (дополнитель...</span>
<span class="t" style="top:966.15px;font-size:25.3px;line-height:25.3px;left:27.91px;transform:scaleX(0.8953);transform-origin:0 0;">12...</span>
<span class="t" style="top:966.15px;font-size:25.3px;line-height:25.3px;left:86.30px;transform:scaleX(0.8495);transform-origin:0 0;">Инсулины</span>
<span class="t" style="top:1003.15px;font-size:25.3px;line-height:25.3px;left:27.40px;transform:scaleX(0.9048);transform-origin:0 0;">21...</span>
<span class="t" style="top:1003.15px;font-size:25.3px;line-height:25.3px;left:86.36px;transform:scaleX(0.8188);transform-origin:0 0;">Косметика</span>
<span class="t" style="top:1041.15px;font-size:25.3px;line-height:25.3px;left:27.40px;transform:scaleX(0.9048);transform-origin:0 0;">22...</span>
<span class="t" style="top:1041.15px;font-size:25.3px;line-height:25.3px;left:87.20px;transform:scaleX(0.8047);transform-origin:0 0;">Лекарственные средства</span>
<span class="t" style="top:1078.15px;font-size:25.3px;line-height:25.3px;left:27.91px;transform:scaleX(0.8953);transform-origin:0 0;">12...</span>
<span class="t" style="top:1078.15px;font-size:25.3px;line-height:25.3px;left:86.35px;transform:scaleX(0.8250);transform-origin:0 0;">&lt;не определено&gt;</span>
<span class="t" style="top:1116.15px;font-size:25.3px;line-height:25.3px;left:27.40px;transform:scaleX(0.9048);transform-origin:0 0;">24...</span>
<span class="t" style="top:1116.15px;font-size:25.3px;line-height:25.3px;left:85.59px;transform:scaleX(0.8022);transform-origin:0 0;">!Стандарт</span>
<span class="t" style="top:1078.15px;font-size:25.3px;line-height:25.3px;left:525.33px;transform:scaleX(0.8708);transform-origin:0 0;">-30,000</span>
<span class="t" style="top:1078.15px;font-size:25.3px;line-height:25.3px;left:679.64px;transform:scaleX(0.8574);transform-origin:0 0;">0,000</span>
<span class="t" style="top:1078.15px;font-size:25.3px;line-height:25.3px;left:950.30px;transform:scaleX(0.8520);transform-origin:0 0;">Розничная</span>
<div style="left:864.8000000000001px;top:1080.3px;width:19.6px;height:19.6px;border:1.8px solid #555;box-sizing:border-box;"><svg style="left:0;top:0" width="16.0" height="16.0" viewBox="0 0 15 15" fill="none" stroke="#4a4a4a" stroke-width="1.800"><path d="M1.300 7.400l4.100 4.300L13.200 2.900"/></svg></div>
<div style="left:1196.2px;top:1080.3px;width:19.6px;height:19.6px;border:1.8px solid #555;box-sizing:border-box;"></div>
<span class="t" style="top:1116.15px;font-size:25.3px;line-height:25.3px;left:525.33px;transform:scaleX(0.8708);transform-origin:0 0;">-30,000</span>
<span class="t" style="top:1116.15px;font-size:25.3px;line-height:25.3px;left:679.64px;transform:scaleX(0.8574);transform-origin:0 0;">0,000</span>
<span class="t" style="top:1116.15px;font-size:25.3px;line-height:25.3px;left:950.30px;transform:scaleX(0.8520);transform-origin:0 0;">Розничная</span>
<div style="left:864.8000000000001px;top:1117.8px;width:19.6px;height:19.6px;border:1.8px solid #555;box-sizing:border-box;"><svg style="left:0;top:0" width="16.0" height="16.0" viewBox="0 0 15 15" fill="none" stroke="#4a4a4a" stroke-width="1.800"><path d="M1.300 7.400l4.100 4.300L13.200 2.900"/></svg></div>
<div style="left:1196.2px;top:1117.8px;width:19.6px;height:19.6px;border:1.8px solid #555;box-sizing:border-box;"></div>
<svg style="left:13px;top:669px" width="8" height="17" viewBox="0 0 8 17"><path d="M0 0l8 8.500L0 17z" fill="#000"/></svg>
<div style="left:7px;top:1231px;width:1299px;height:2px;background:#a0a0a0;"></div>
<div style="left:7px;top:1233px;width:1299px;height:41.5px;background:#f0f0f0;"></div>
<div style="left:23px;top:1233px;width:2px;height:41.5px;background:#c4c4c4;"></div>
<div style="left:1305px;top:1231px;width:1px;height:44px;background:#c4c4c4;"></div>
<div style="left:7px;top:1274px;width:1299px;height:1px;background:#c4c4c4;"></div>
<div style="left:87.5px;top:1236.5px;width:433.5px;height:35.5px;background:#e6e9ea;border:1px solid #dcdfe0;box-sizing:border-box;"></div>
<span class="t" style="top:1242.15px;font-size:25.3px;line-height:25.3px;left:89.66px;transform:scaleX(0.8407);transform-origin:0 0;">Запис 1 з 13</span>
<div style="left:0px;top:1278px;width:2164px;height:2px;background:#dddddd;"></div>
<div style="left:0px;top:1280px;width:2164px;height:42px;background:#f0f0f0;"></div>
<div style="left:6px;top:1285px;width:187px;height:34px;background:#f0f0f0;border:2px solid #1a1a1a;box-sizing:border-box;"></div>
<span class="t" style="top:1292.80px;font-size:16px;line-height:16px;left:9.39px;transform:scaleX(0.9088);transform-origin:0 0;">Головна</span>
<div style="left:196px;top:1285px;width:187.5px;height:34px;background:#ffd3a6;border:2px solid #2684d6;box-sizing:border-box;"></div>
<span class="t" style="top:1292.80px;font-size:16px;line-height:16px;left:199.11px;transform:scaleX(0.8913);transform-origin:0 0;">Націнки</span>
<div style="left:0px;top:1322px;width:2164px;height:30px;background:#e3e3e3;"></div>
<div style="left:0px;top:1322px;width:2164px;height:2px;background:#f4f4f4;"></div>
<div style="left:298px;top:1326px;width:2px;height:24px;background:#c9c9c9;"></div>
<div style="left:603px;top:1326px;width:2px;height:24px;background:#c9c9c9;"></div>
<div style="left:662px;top:1326px;width:2px;height:24px;background:#c9c9c9;"></div>
<div style="left:1118px;top:1326px;width:2px;height:24px;background:#c9c9c9;"></div>
<div style="left:0px;top:1350.5px;width:2164px;height:1.5px;background:#1b1b1b;"></div>
<span class="t" style="top:1328.55px;font-size:18.5px;line-height:18.5px;font-family:'Liberation Sans','DejaVu Sans',sans-serif;left:30.60px;transform:scaleX(0.8982);transform-origin:0 0;">База даних: TASA3@TITAN</span>
<span class="t" style="top:1328.55px;font-size:18.5px;line-height:18.5px;font-family:'Liberation Sans','DejaVu Sans',sans-serif;left:329.12px;transform:scaleX(0.8785);transform-origin:0 0;">Користувач: GIFT</span>
<span class="t" style="top:1328.55px;font-size:18.5px;line-height:18.5px;font-family:'Liberation Sans','DejaVu Sans',sans-serif;left:636.00px;transform:scaleX(0.9000);transform-origin:0 0;">5</span>
<span class="t" style="top:1328.55px;font-size:18.5px;line-height:18.5px;font-family:'Liberation Sans','DejaVu Sans',sans-serif;left:666.63px;transform:scaleX(0.8744);transform-origin:0 0;">Касовий апарат: Samsung ER-350 №123456</span>
<span class="t" style="top:1328.55px;font-size:18.5px;line-height:18.5px;font-family:'Liberation Sans','DejaVu Sans',sans-serif;left:1124.50px;transform:scaleX(0.8822);transform-origin:0 0;">Зона: Склад [1]</span>
<svg style="left:6px;top:1327px" width="18" height="22" viewBox="0 0 18 22"><path d="M1 4l8-3 8 3v14l-8 3-8-3z" fill="#6f8fc4" stroke="#3d5a94"/><path d="M1 8l8 3 8-3M1 12l8 3 8-3M1 16l8 3 8-3" stroke="#cfdcf3" fill="none"/></svg>
<svg style="left:304px;top:1326px" width="18" height="24" viewBox="0 0 18 24"><circle cx="8" cy="6" r="5" fill="#e0503a"/><circle cx="9.500" cy="8" r="4.300" fill="#c8cdea"/><path d="M1.500 22c0-6 3-8 8-8s8 2 8 8z" fill="#8f96d6" stroke="#6a70b8"/></svg>
<svg style="left:607px;top:1328px" width="23" height="21" viewBox="0 0 23 21"><path d="M2 16l3-8 8-5 8 4v10z" fill="#7e8cb8" stroke="#525e8a"/><circle cx="7" cy="17" r="3" fill="#d8a23a" stroke="#7a5a1a"/><circle cx="17" cy="17" r="3" fill="#d8a23a" stroke="#7a5a1a"/></svg>
<div style="left:518px;top:660px;width:771.5px;height:418.5999999999999px;background:#f0f0f0;"></div>
<div style="left:518px;top:660px;width:1px;height:418.5999999999999px;background:#7a7a7a;"></div>
<div style="left:1289px;top:662px;width:1px;height:40px;background:#7a7a7a;"></div>
<div style="left:522px;top:664px;width:763px;height:38px;background:#fff;"></div>
<span class="t" style="top:675.30px;font-size:18px;line-height:18px;font-family:'Liberation Sans','DejaVu Sans',sans-serif;left:524.02px;transform:scaleX(0.9843);transform-origin:0 0;">Наценки (ID:1809)</span>
<svg style="left:1256px;top:674px" width="17" height="17" viewBox="0 0 17 17" stroke="#000" stroke-width="1.200"><path d="M1 1l15 15M16 1L1 16"/></svg>
<div style="left:527px;top:703px;width:426.5px;height:368px;border:1px solid #dfdfdf;box-sizing:border-box;border-bottom:none;"></div>
<span class="t" style="top:713.80px;font-size:16px;line-height:16px;left:532.38px;transform:scaleX(0.9191);transform-origin:0 0;">Цінова умова:</span>
<span class="t" style="top:769.80px;font-size:16px;line-height:16px;left:532.38px;transform:scaleX(0.9216);transform-origin:0 0;">Цінова група:</span>
<span class="t" style="top:821.80px;font-size:16px;line-height:16px;left:532.40px;transform:scaleX(0.8990);transform-origin:0 0;">Базова ціна:</span>
<span class="t" style="top:878.80px;font-size:16px;line-height:16px;left:532.38px;transform:scaleX(0.9200);transform-origin:0 0;">Відсоток:</span>
<span class="t" style="top:878.80px;font-size:16px;line-height:16px;left:726.20px;transform:scaleX(0.9413);transform-origin:0 0;">Дельта:</span>
<span class="t" style="top:713.80px;font-size:17px;line-height:17px;color:#ff8080;left:672.00px;transform:scaleX(0.9000);transform-origin:0 0;">*</span>
<span class="t" style="top:769.80px;font-size:17px;line-height:17px;color:#ff8080;left:662.80px;transform:scaleX(0.9000);transform-origin:0 0;">*</span>
<span class="t" style="top:877.80px;font-size:17px;line-height:17px;color:#ff8080;left:609.40px;transform:scaleX(0.9000);transform-origin:0 0;">*</span>
<span class="t" style="top:877.80px;font-size:17px;line-height:17px;color:#ff8080;left:794.80px;transform:scaleX(0.9000);transform-origin:0 0;">*</span>
<div style="left:533px;top:733px;width:396.5px;height:30px;background:#eeeeee;border:3px solid #fcfcfc;box-sizing:border-box;outline:1px solid #e2e2e2;outline-offset:-1px;"></div>
<span class="t" style="top:739.80px;font-size:16px;line-height:16px;left:536.60px;transform:scaleX(0.8463);transform-origin:0 0;">Vip10</span>
<div style="left:533px;top:786px;width:396.5px;height:31px;background:#fff;border:1.5px solid #7a7a7a;box-sizing:border-box;"></div>
<span class="t" style="top:792.80px;font-size:16px;line-height:16px;left:535.09px;transform:scaleX(0.9095);transform-origin:0 0;">Биологически активные вещества</span>
<div style="left:801.2px;top:791.4px;width:1.3px;height:18.300000000000068px;background:#000;"></div>
<svg style="left:909.5px;top:798px" width="15" height="9" viewBox="0 0 15 9" fill="none" stroke="#333" stroke-width="1.400"><path d="M1 1l6.500 6.500L14 1"/></svg>
<div style="left:533px;top:840px;width:396.5px;height:31px;background:#fff;border:1.5px solid #7a7a7a;box-sizing:border-box;"></div>
<span class="t" style="top:847.80px;font-size:16px;line-height:16px;left:535.08px;transform:scaleX(0.9177);transform-origin:0 0;">Розничная</span>
<svg style="left:909.5px;top:852px" width="15" height="9" viewBox="0 0 15 9" fill="none" stroke="#333" stroke-width="1.400"><path d="M1 1l6.500 6.500L14 1"/></svg>
<div style="left:533px;top:895px;width:188px;height:30.5px;background:#fff;border:1.5px solid #7a7a7a;box-sizing:border-box;"></div>
<span class="t" style="top:901.80px;font-size:16px;line-height:16px;right:1448.04px;transform:scaleX(0.8785);transform-origin:100% 0;">-30</span>
<div style="left:727.7px;top:895px;width:201.8px;height:30.5px;background:#fff;border:1.5px solid #7a7a7a;box-sizing:border-box;"></div>
<span class="t" style="top:901.80px;font-size:16px;line-height:16px;right:1239.83px;transform:scaleX(0.9556);transform-origin:100% 0;">0</span>
<span class="t" style="top:931.80px;font-size:16px;line-height:16px;color:#a0a0aa;left:532.42px;transform:scaleX(0.8847);transform-origin:0 0;">Виробник</span>
<span class="t" style="top:986.80px;font-size:16px;line-height:16px;color:#a0a0aa;left:532.39px;transform:scaleX(0.9054);transform-origin:0 0;">Постачальник</span>
<div style="left:533px;top:950.5px;width:396.5px;height:30px;background:#f2f2f2;border:1px solid #d6d6d6;box-sizing:border-box;box-shadow:inset 0 0 0 1.5px #fbfbfb;"></div>
<div style="left:904.6px;top:953.0px;width:22px;height:24.5px;background:#cccccc;"></div>
<div style="left:911.5px;top:965.0px;width:1.6px;height:1.6px;background:#f2f2f2;"></div>
<div style="left:914.8px;top:965.0px;width:1.6px;height:1.6px;background:#f2f2f2;"></div>
<div style="left:918.1px;top:965.0px;width:1.6px;height:1.6px;background:#f2f2f2;"></div>
<div style="left:533px;top:1004.5px;width:396.5px;height:30px;background:#f2f2f2;border:1px solid #d6d6d6;box-sizing:border-box;box-shadow:inset 0 0 0 1.5px #fbfbfb;"></div>
<div style="left:904.6px;top:1007.0px;width:22px;height:24.5px;background:#cccccc;"></div>
<div style="left:911.5px;top:1019.0px;width:1.6px;height:1.6px;background:#f2f2f2;"></div>
<div style="left:914.8px;top:1019.0px;width:1.6px;height:1.6px;background:#f2f2f2;"></div>
<div style="left:918.1px;top:1019.0px;width:1.6px;height:1.6px;background:#f2f2f2;"></div>
<div style="left:536.75px;top:1045.65px;width:19.5px;height:19.5px;background:#fff;border:1.6px solid #333;box-sizing:border-box;"><svg style="left:0;top:0" width="16.3" height="16.3" viewBox="0 0 15 15" fill="none" stroke="#4a4a4a" stroke-width="1.800"><path d="M1.300 7.400l4.100 4.300L13.200 2.900"/></svg></div>
<div style="left:557.30px;top:1048.80px;width:158.30px;height:22.4px;overflow:hidden"><span class="t" style="top:0;font-size:16px;line-height:16px;left:2.05px;transform:scaleX(0.9521);transform-origin:0 0;">Не використовувати</span></div>
<div style="left:718.35px;top:1045.65px;width:19.5px;height:19.5px;background:#fff;border:1.6px solid #333;box-sizing:border-box;"></div>
<span class="t" style="top:1048.80px;font-size:16px;line-height:16px;left:740.89px;transform:scaleX(0.9137);transform-origin:0 0;">Чи не накопичувал</span>
<div style="left:955px;top:712.3px;width:218.5px;height:359px;border:1px solid #dcdcdc;box-sizing:border-box;border-bottom:none;"></div>
<div style="left:962px;top:705px;width:137px;height:14px;background:#f0f0f0;"></div>
<span class="t" style="top:705.80px;font-size:16px;line-height:16px;left:964.11px;transform:scaleX(0.8923);transform-origin:0 0;">Націнка за сумою</span>
<span class="t" style="top:728.80px;font-size:16px;line-height:16px;left:964.98px;transform:scaleX(0.9170);transform-origin:0 0;">Грн до</span>
<span class="t" style="top:728.80px;font-size:16px;line-height:16px;left:1095.90px;transform:scaleX(1.0000);transform-origin:0 0;">%</span>
<div style="left:1003.8px;top:755px;width:74px;height:258px;background:#fff;border:1.5px solid #808080;box-sizing:border-box;"></div>
<div style="left:1003.8px;top:782.92px;width:74.0px;height:1.5px;background:#808080;"></div>
<div style="left:1003.8px;top:811.54px;width:74.0px;height:1.5px;background:#808080;"></div>
<div style="left:1003.8px;top:840.16px;width:74.0px;height:1.5px;background:#808080;"></div>
<div style="left:1003.8px;top:868.78px;width:74.0px;height:1.5px;background:#808080;"></div>
<div style="left:1003.8px;top:897.4px;width:74.0px;height:1.5px;background:#808080;"></div>
<div style="left:1003.8px;top:926.02px;width:74.0px;height:1.5px;background:#808080;"></div>
<div style="left:1003.8px;top:954.64px;width:74.0px;height:1.5px;background:#808080;"></div>
<div style="left:1003.8px;top:983.26px;width:74.0px;height:1.5px;background:#808080;"></div>
<div style="left:1082px;top:755px;width:74px;height:258px;background:#fff;border:1.5px solid #808080;box-sizing:border-box;"></div>
<div style="left:1082px;top:782.92px;width:74px;height:1.5px;background:#808080;"></div>
<div style="left:1082px;top:811.54px;width:74px;height:1.5px;background:#808080;"></div>
<div style="left:1082px;top:840.16px;width:74px;height:1.5px;background:#808080;"></div>
<div style="left:1082px;top:868.78px;width:74px;height:1.5px;background:#808080;"></div>
<div style="left:1082px;top:897.4px;width:74px;height:1.5px;background:#808080;"></div>
<div style="left:1082px;top:926.02px;width:74px;height:1.5px;background:#808080;"></div>
<div style="left:1082px;top:954.64px;width:74px;height:1.5px;background:#808080;"></div>
<div style="left:1082px;top:983.26px;width:74px;height:1.5px;background:#808080;"></div>
<span class="t" style="top:761.80px;font-size:16px;line-height:16px;left:687.30px;width:600px;text-align:center;transform:scaleX(0.9000);transform-origin:50% 0;">1</span>
<span class="t" style="top:790.80px;font-size:16px;line-height:16px;left:687.30px;width:600px;text-align:center;transform:scaleX(0.9000);transform-origin:50% 0;">2</span>
<span class="t" style="top:819.80px;font-size:16px;line-height:16px;left:687.30px;width:600px;text-align:center;transform:scaleX(0.9000);transform-origin:50% 0;">3</span>
<span class="t" style="top:847.80px;font-size:16px;line-height:16px;left:687.30px;width:600px;text-align:center;transform:scaleX(0.9000);transform-origin:50% 0;">4</span>
<span class="t" style="top:876.80px;font-size:16px;line-height:16px;left:687.30px;width:600px;text-align:center;transform:scaleX(0.9000);transform-origin:50% 0;">5</span>
<span class="t" style="top:904.80px;font-size:16px;line-height:16px;left:687.30px;width:600px;text-align:center;transform:scaleX(0.9000);transform-origin:50% 0;">6</span>
<span class="t" style="top:933.80px;font-size:16px;line-height:16px;left:687.30px;width:600px;text-align:center;transform:scaleX(0.9000);transform-origin:50% 0;">7</span>
<span class="t" style="top:962.80px;font-size:16px;line-height:16px;left:687.30px;width:600px;text-align:center;transform:scaleX(0.9000);transform-origin:50% 0;">8</span>
<span class="t" style="top:990.80px;font-size:16px;line-height:16px;left:687.30px;width:600px;text-align:center;transform:scaleX(0.9000);transform-origin:50% 0;">9</span>
<div style="left:1176.3px;top:715.5px;width:106px;height:34.2px;background:#e1e1e1;border:3.200px solid #0078d7;box-sizing:border-box;"></div>
<span class="t" style="top:724.80px;font-size:16px;line-height:16px;left:1215.86px;transform:scaleX(0.8634);transform-origin:0 0;">Так</span>
<div style="left:1176.3px;top:764.3px;width:105.7px;height:33px;background:#e1e1e1;border:1.3px solid #adadad;box-sizing:border-box;"></div>
<span class="t" style="top:772.80px;font-size:16px;line-height:16px;left:1187.40px;transform:scaleX(0.9345);transform-origin:0 0;">Скасувати</span>
<div style="left:518.9px;top:660.2px;width:769.3000000000001px;height:413.89999999999986px;border:4.200px solid #fc0000;box-sizing:border-box;border-radius:1.500px;"></div>
<div style="left:0px;top:0px;width:2164px;height:550.5px;background:rgba(0,0,0,.25)"></div>
<div style="left:0px;top:1315px;width:2164px;height:37px;background:rgba(0,0,0,.25)"></div>
<div style="left:0px;top:550.5px;width:5px;height:764.5px;background:rgba(0,0,0,.25)"></div>
<div style="left:2157px;top:550.5px;width:7px;height:764.5px;background:rgba(0,0,0,.25)"></div>
<svg style="left:100px;top:560px" width="380" height="64" viewBox="100 560 380 64"><path d="M469.800 569.800L130.600 601.200l-.8-4.100L114.500 606.900l17.100 8-.2-6.100z" fill="#fb0404"/></svg>
</body></html>
